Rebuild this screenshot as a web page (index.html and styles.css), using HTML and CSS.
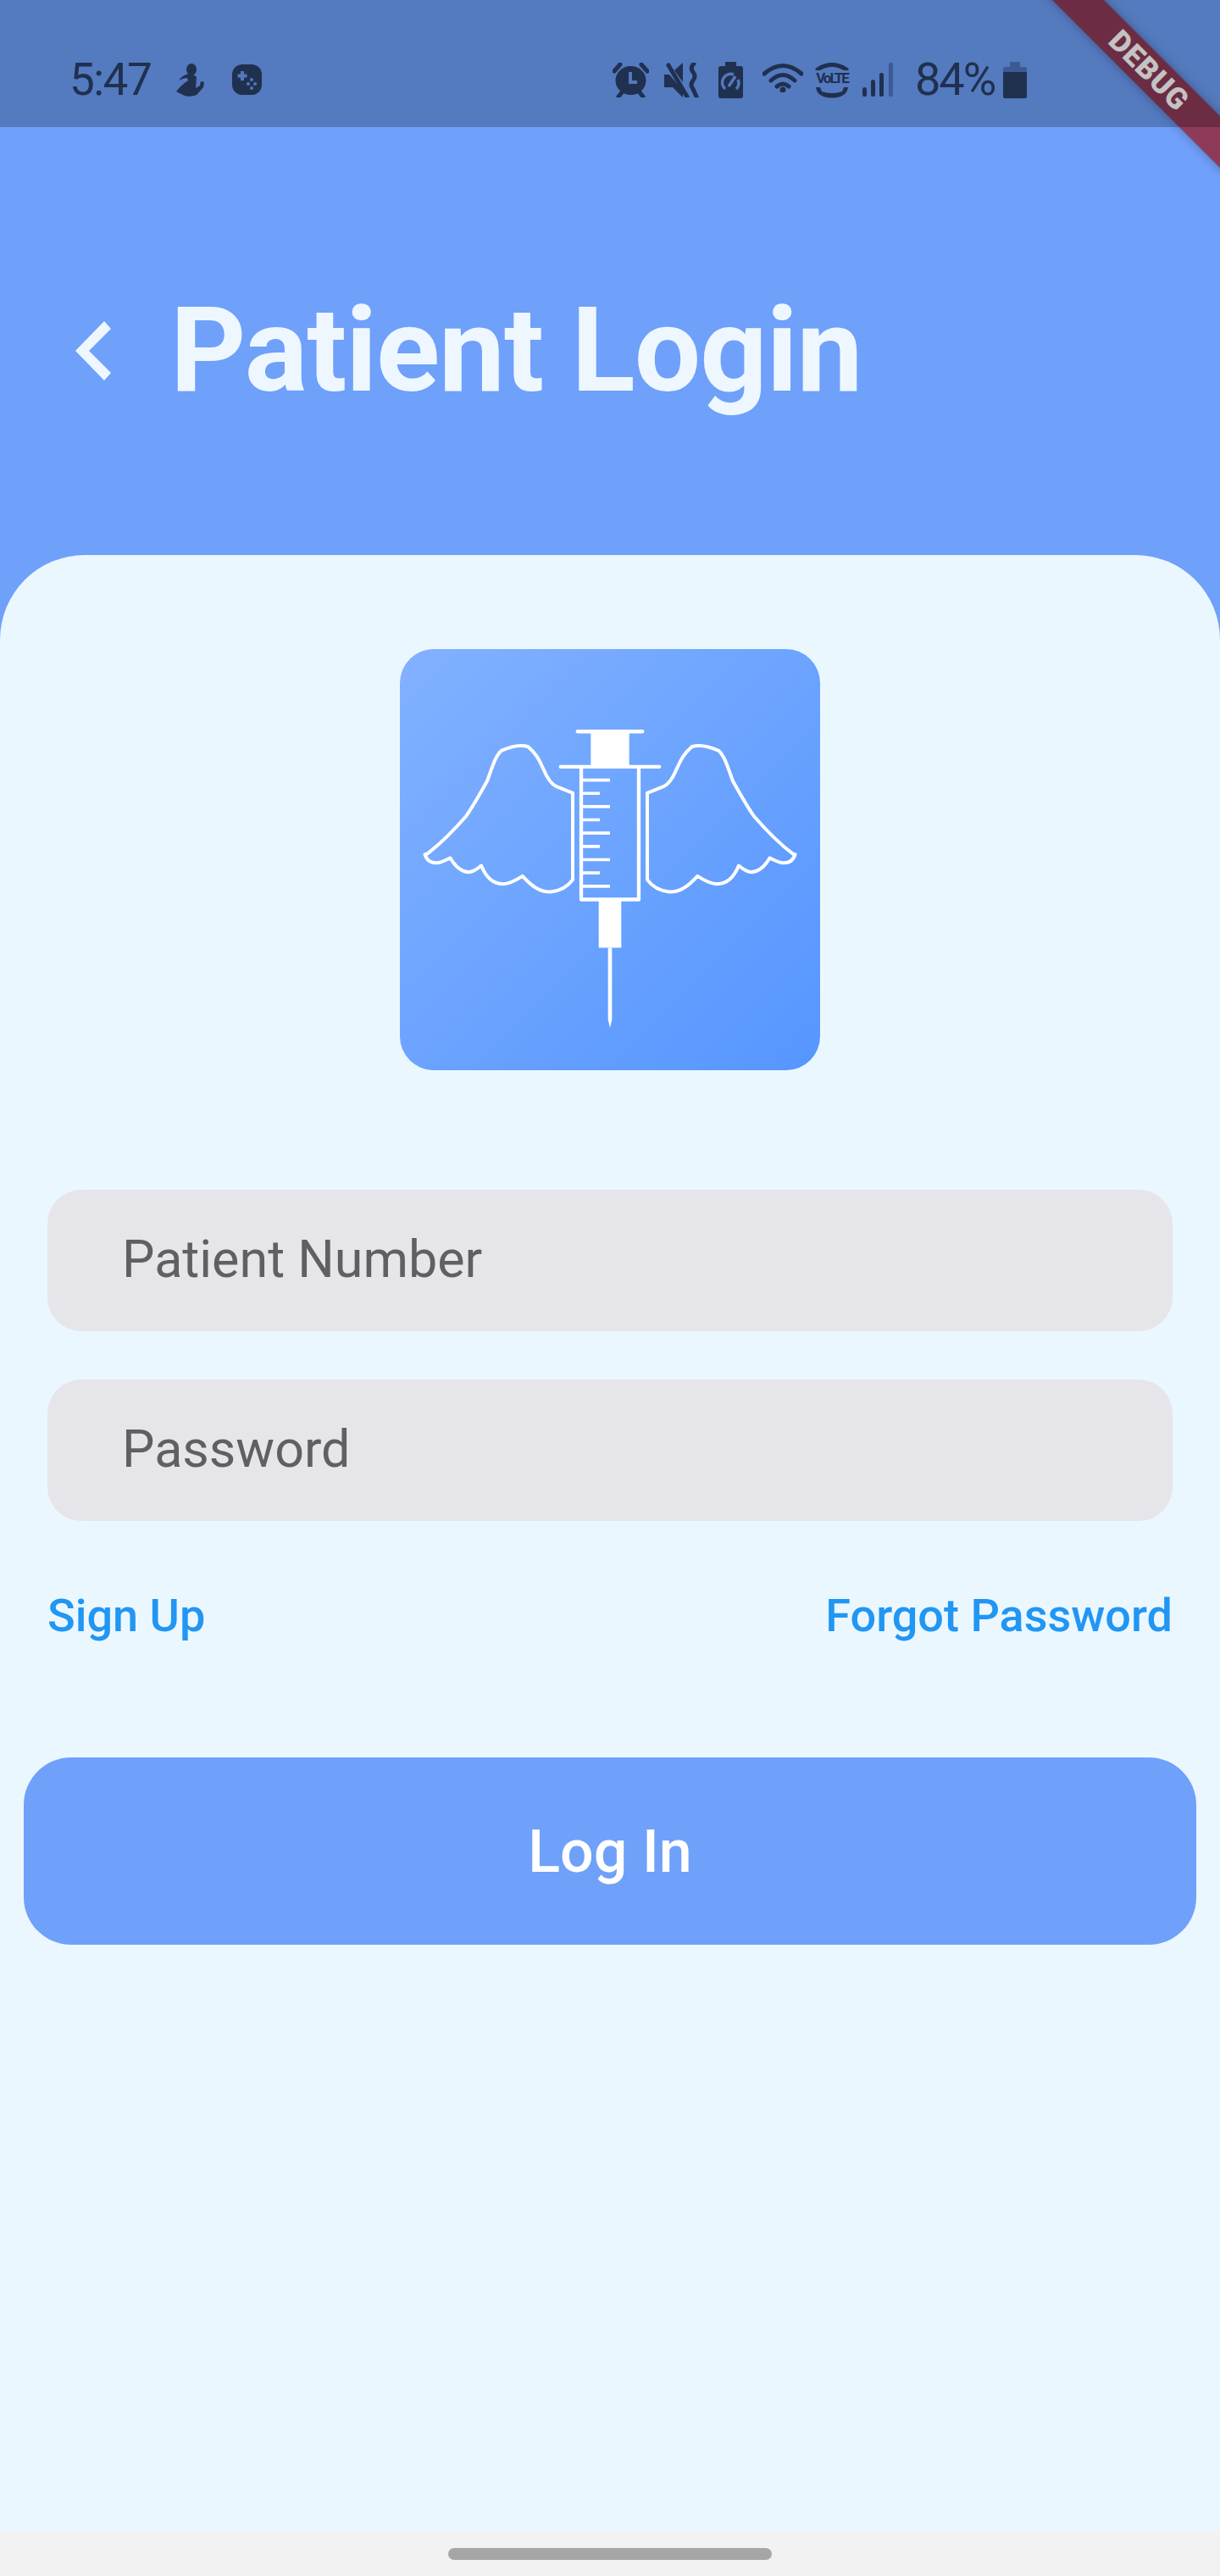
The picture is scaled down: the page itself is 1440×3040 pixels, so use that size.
FILE: index.html
```html
<!DOCTYPE html>
<html lang="en">
  <head>
    <meta charset="UTF-8" />
    <title>Patient Login</title>
    <link rel="stylesheet" href="styles.css">
  </head>
  <body>
    <div class="screen">
      <div class="debug-banner"><span>DEBUG</span></div>
      <div class="status-bar">
        <span class="clock">5:47</span>
        <svg class="ic-runner" viewBox="0 0 35 39">
          <ellipse cx="19" cy="7" rx="6" ry="7" />
          <path d="M16 12 Q9 13 4 20 Q10 17 14 17 L15 20 Q6 26 1 33 L11 38 Q18 40 25 37 L33 28 L34 22 L30 21 L29 26 L24 29 L25 16 Q23 13 16 12Z" />
        </svg>
        <svg class="ic-game" viewBox="0 0 35 36">
          <rect width="35" height="36" rx="12" />
          <path class="cut" d="M12 8v11M6.500 13.500h11" />
          <circle class="dot" cx="23" cy="18" r="2" />
          <circle class="dot" cx="19" cy="23" r="2" />
          <circle class="dot" cx="27" cy="23" r="2" />
          <circle class="dot" cx="23" cy="28" r="2" />
        </svg>
        <div class="status-right">
          <svg class="ic-alarm" viewBox="0 0 43 41">
            <path class="line" d="M2 10 L9 2M41 10 L34 2M7 40 L11 35M36 40 L32 35" />
            <ellipse cx="21.500" cy="21" rx="18" ry="17" />
            <path class="cut" d="M21 11v12h8" />
          </svg>
          <svg class="ic-mute" viewBox="0 0 41 41">
            <path d="M0 14 H6 L22 33 V41 L10 29 H0Z" />
            <path d="M12 9 L22 0 V23Z" />
            <path class="line" d="M5 3 L27 40" />
            <path class="line" d="M35 1 Q30 6 34 11 T34 21 T34 31 L38 40" />
          </svg>
          <svg class="ic-saver" viewBox="0 0 29 43">
            <path d="M8 0 H21 V5 H26 Q29 5 29 8 V40 Q29 43 26 43 H3 Q0 43 0 40 V8 Q0 5 3 5 H8Z" />
            <path class="cut thin" d="M8 32 A10 10 0 0 1 18 15M21 32 A10 10 0 0 0 23 21M12 29 L20 17" />
          </svg>
          <svg class="ic-wifi" viewBox="0 0 48 35">
            <path class="line" d="M2 13 Q24 -6 46 13M10 21 Q24 8 38 21M17 28 Q24 22 31 28" />
            <circle cx="24" cy="32" r="3.500" />
          </svg>
          <div class="ic-volte">
            <svg viewBox="0 0 40 10"><path class="line" d="M3 9 Q20 -2 37 9" /></svg>
            <span>VoLTE</span>
            <svg viewBox="0 0 40 14"><path d="M1 1 H6 L8 6 Q20 10 32 6 L34 1 H39 Q38 9 30 12 Q20 15 10 12 Q2 9 1 1Z" /></svg>
          </div>
          <svg class="ic-signal" viewBox="0 0 36 40">
            <rect x="0" y="29" width="5" height="11" rx="2.500" />
            <rect x="10" y="20" width="5" height="20" rx="2.500" />
            <rect x="20" y="12" width="5" height="28" rx="2.500" />
            <rect class="faded" x="31" y="0" width="5" height="40" rx="2" />
          </svg>
          <span class="percent">84%</span>
          <svg class="ic-battery" viewBox="0 0 28 43">
            <path class="faded" d="M8 0 H20 V6 H26 Q28 6 28 8 V12 H0 V8 Q0 6 2 6 H8Z" />
            <path d="M0 12 H28 V41 Q28 43 26 43 H2 Q0 43 0 41Z" />
          </svg>
        </div>
      </div>

      <header class="page-header">
        <svg class="back-icon" viewBox="0 0 42 70">
          <path d="M34 0 L42 9 L16 35 L42 61 L34 70 L0 35Z" />
        </svg>
        <h1>Patient Login</h1>
      </header>

      <main class="card">
        <div class="logo">
          <svg viewBox="36 18 1488 1492">
            <defs>
              <path id="wing" d="M648 528 L590 505 C570 495 555 470 545 445 C530 415 525 395 490 364 C470 358 440 358 395 378 C375 395 365 430 345 485 C320 530 295 575 270 610 C235 650 190 700 130 745 L124 745 C130 765 145 778 170 775 C185 773 200 765 214 758 C230 785 250 808 280 808 C295 807 310 797 324 785 C340 825 365 850 400 850 C425 850 450 835 470 822 C500 855 530 880 570 878 C600 875 630 860 648 835 Z" />
            </defs>
            <use href="#wing" class="wing" />
            <use href="#wing" class="wing" transform="translate(1560 0) scale(-1 1)" />
            <path class="logo-line" d="M665 310 H895M605 435 H955" />
            <rect class="logo-fill" x="712" y="310" width="136" height="125" />
            <path class="logo-line" d="M678 440 V905 H882 V440" />
            <path class="logo-line ticks" d="M684 482 H780M684 529 H744M684 576 H780M684 623 H744M684 670 H780M684 717 H744M684 764 H780M684 811 H744M684 858 H780" />
            <rect class="logo-fill" x="740" y="905" width="80" height="171" />
            <path class="logo-fill" d="M773 1076 H787 V1330 L780 1360 L773 1330Z" />
          </svg>
        </div>

        <form class="login-form">
          <div class="field">Patient Number</div>
          <div class="field">Password</div>
          <div class="links">
            <a href="#">Sign Up</a>
            <a href="#">Forgot Password</a>
          </div>
          <button type="button" class="login-btn">Log In</button>
        </form>
      </main>

      <div class="nav-bar"><span class="home-pill"></span></div>
    </div>
  </body>
</html>
```

FILE: styles.css
```css
* {
  margin: 0;
  padding: 0;
  box-sizing: border-box;
  font-family: "Roboto", sans-serif;
}

body {
  background: #f2f2f2;
}

.screen {
  position: relative;
  width: 1440px;
  height: 3040px;
  display: flex;
  flex-direction: column;
  overflow: hidden;
  background: #6fa0fa;
}

/* status bar */
.status-bar {
  position: relative;
  z-index: 2;
  height: 150px;
  flex-shrink: 0;
  display: flex;
  align-items: center;
  padding: 38px 0 0 82px;
  background: rgba(0, 0, 0, 0.235);
  color: #20304f;
}

.status-bar svg {
  display: block;
  fill: #20304f;
  flex-shrink: 0;
}

.status-bar .line {
  fill: none;
  stroke: #20304f;
  stroke-width: 5;
  stroke-linecap: round;
}

.status-bar .cut {
  fill: none;
  stroke: #5577bd;
  stroke-width: 4;
}

.status-bar .thin {
  stroke-width: 3.500;
}

.status-bar .dot {
  fill: #5577bd;
}

.status-bar .faded {
  fill: #3c5a94;
}

.clock {
  font-size: 53px;
  line-height: 40px;
  width: 97px;
  letter-spacing: -1.500px;
}

.ic-runner {
  width: 35px;
  height: 39px;
  margin-left: 28px;
}

.ic-game {
  width: 35px;
  height: 36px;
  margin-left: 32px;
}

.status-right {
  display: flex;
  align-items: center;
  margin-left: 414px;
}

.ic-alarm {
  width: 43px;
  height: 41px;
}

.ic-mute {
  width: 41px;
  height: 41px;
  margin-left: 18px;
}

.ic-saver {
  width: 29px;
  height: 43px;
  margin-left: 23px;
}

.ic-wifi {
  width: 48px;
  height: 35px;
  margin-left: 23px;
  margin-bottom: 6px;
}

.ic-volte {
  width: 40px;
  height: 43px;
  margin-left: 14px;
  display: flex;
  flex-direction: column;
  align-items: center;
  justify-content: space-between;
}

.ic-volte svg {
  width: 40px;
}

.ic-volte span {
  font-size: 17px;
  font-weight: 700;
  line-height: 14px;
  letter-spacing: -2px;
}

.ic-signal {
  width: 36px;
  height: 40px;
  margin-left: 16px;
}

.percent {
  font-size: 54px;
  line-height: 44px;
  width: 94px;
  margin-left: 26px;
  letter-spacing: -2px;
}

.ic-battery {
  width: 28px;
  height: 43px;
  margin-left: 10px;
}

/* flutter debug ribbon */
.debug-banner {
  position: absolute;
  z-index: 1;
  top: 62px;
  right: -66px;
  width: 300px;
  height: 43px;
  transform: rotate(45deg);
  background: #8e3a58;
  box-shadow: 0 0 12px rgba(0, 0, 0, 0.3);
  display: flex;
  align-items: center;
  justify-content: center;
}

.debug-banner span {
  color: #ffffff;
  font-size: 35px;
  font-weight: 900;
  letter-spacing: 1px;
}

/* header */
.page-header {
  height: 505px;
  flex-shrink: 0;
  display: flex;
  align-items: center;
  gap: 70px;
  padding: 22px 0 0 89px;
  color: #eef7ff;
}

.back-icon {
  width: 42px;
  height: 70px;
  flex-shrink: 0;
  fill: #eef7ff;
}

.page-header h1 {
  font-size: 139px;
  font-weight: 700;
  line-height: 1;
  letter-spacing: -1px;
}

/* card */
.card {
  flex: 1;
  background: #ebf7ff;
  border-radius: 100px 100px 0 0;
  padding-top: 111px;
}

.logo {
  width: 496px;
  height: 497px;
  margin: 0 auto;
  border-radius: 40px;
  background: linear-gradient(135deg, #82b1ff, #5596ff);
}

.logo svg {
  display: block;
  width: 100%;
  height: 100%;
}

.wing {
  fill: none;
  stroke: #fff;
  stroke-width: 12;
  stroke-linejoin: round;
}

.logo-line {
  fill: none;
  stroke: #fff;
  stroke-width: 13;
  stroke-linecap: round;
  stroke-linejoin: round;
}

.ticks {
  stroke-width: 11;
  stroke-linecap: butt;
}

.logo-fill {
  fill: #fff;
}

.login-form {
  display: flex;
  flex-direction: column;
  margin-top: 141px;
}

.field {
  height: 167px;
  margin: 0 56px 57px;
  padding: 0 0 4px 88px;
  display: flex;
  align-items: center;
  border-radius: 40px;
  background: #e6e5ea;
  color: #5f6063;
  font-size: 61px;
}

.links {
  display: flex;
  justify-content: space-between;
  margin: 25px 56px 0;
}

.links a {
  color: #2196f3;
  font-size: 54px;
  font-weight: 500;
  line-height: 60px;
  text-decoration: none;
}

.login-btn {
  height: 221px;
  margin: 137px 28px 0;
  border: 0;
  border-radius: 56px;
  background: #6fa0fa;
  color: #fff;
  font-size: 70px;
  font-weight: 500;
}

/* gesture bar */
.nav-bar {
  height: 53px;
  flex-shrink: 0;
  display: flex;
  justify-content: center;
  padding-top: 20px;
  background: #f2f2f2;
}

.home-pill {
  width: 382px;
  height: 14px;
  border-radius: 7px;
  background: #a6a6a6;
}
```
